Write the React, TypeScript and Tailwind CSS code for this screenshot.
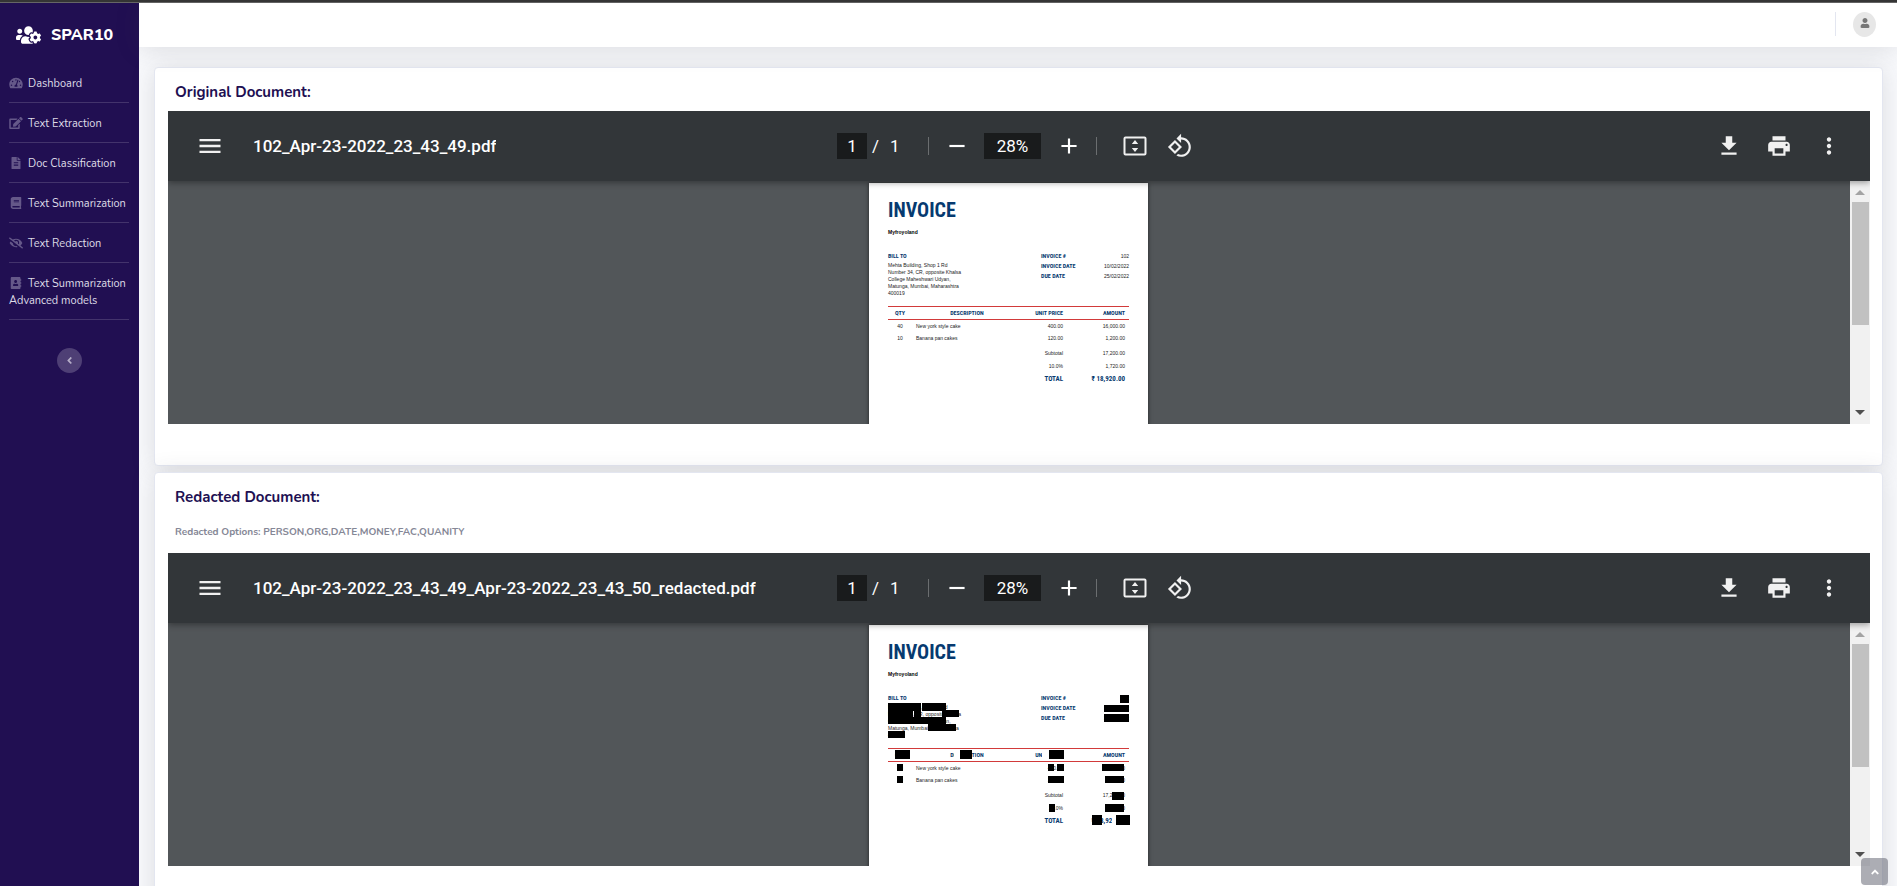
import React from "react";
import {
  FaAddressBook,
  FaAngleLeft,
  FaAngleUp,
  FaBook,
  FaEdit,
  FaEyeSlash,
  FaFileAlt,
  FaTachometerAlt,
  FaUser,
  FaUsersCog,
} from "react-icons/fa";
import { MdAdd, MdFileDownload, MdMenu, MdMoreVert, MdPrint, MdRemove } from "react-icons/md";
import type { IconType } from "react-icons";

const navItems: { label: string; icon: IconType }[] = [
  { label: "Dashboard", icon: FaTachometerAlt },
  { label: "Text Extraction", icon: FaEdit },
  { label: "Doc Classification", icon: FaFileAlt },
  { label: "Text Summarization", icon: FaBook },
  { label: "Text Redaction", icon: FaEyeSlash },
  { label: "Text Summarization Advanced models", icon: FaAddressBook },
];

function Sidebar() {
  return (
    <aside className="flex w-[139px] shrink-0 flex-col bg-[#210f52] pt-[20px] pr-[10px] pl-[9px]">
      <a href="#" className="flex h-6 items-center pl-[7px] text-white">
        <FaUsersCog className="h-[20px] w-[25px]" />
        <span className="ml-[10px] text-[16px] leading-6 font-extrabold">SPAR10</span>
      </a>
      <nav className="mt-[16px]">
        <ul>
          {navItems.map(({ label, icon: Icon }) => (
            <li key={label} className="border-b border-[#43336c]">
              <a href="#" className="block pt-[12px] pb-[10px] text-[11px] leading-[17px] text-[#dedbe6]">
                <Icon className="mr-[5px] inline-block h-[12px] w-[14px] align-[-2px] text-[#655889]" />
                {label}
              </a>
            </li>
          ))}
        </ul>
      </nav>
      <button
        aria-label="Collapse sidebar"
        className="mt-[28px] flex size-[25px] items-center justify-center self-center rounded-full bg-[#4e3f75] text-[#b6aec8]"
      >
        <FaAngleLeft className="size-[11px]" />
      </button>
    </aside>
  );
}

function FitIcon() {
  return (
    <svg viewBox="0 0 24 20" className="h-[20px] w-[24px]" fill="none">
      <rect x="1.5" y="1.5" width="21" height="17" rx="1" stroke="#f1f1f1" strokeWidth="2" />
      <path d="M12 4l3.200 4H8.800zM12 16l3.200-4H8.800z" fill="#f1f1f1" />
    </svg>
  );
}

function RotateIcon() {
  return (
    <svg viewBox="0 0 24 24" className="size-[26px]" fill="#f1f1f1">
      <path d="M7.340 6.410L.86 12.900l6.490 6.480 6.490-6.480-6.500-6.490zM3.690 12.900l3.660-3.660L11 12.900l-3.660 3.660-3.650-3.660zm15.670-6.260C17.610 4.880 15.300 4 13 4V.76L8.760 5 13 9.240V6c1.790 0 3.580.68 4.950 2.050 2.730 2.730 2.730 7.170 0 9.900C16.580 19.320 14.790 20 13 20c-.97 0-1.940-.21-2.840-.61l-1.490 1.490C10.020 21.620 11.510 22 13 22c2.300 0 4.610-.88 6.360-2.640 3.520-3.510 3.520-9.210 0-12.720z" />
    </svg>
  );
}

function ToolButton({ label, children }: { label: string; children: React.ReactNode }) {
  return (
    <button aria-label={label} className="flex size-10 shrink-0 items-center justify-center">
      {children}
    </button>
  );
}

function Toolbar({ title }: { title: string }) {
  return (
    <div className="relative z-10 flex h-[70px] items-center bg-[#323639] font-['Roboto',sans-serif] text-[#f1f1f1] shadow-[0_2px_6px_rgba(0,0,0,0.35)]">
      <div className="flex min-w-0 flex-1 items-center pl-[22px]">
        <ToolButton label="Menu">
          <MdMenu className="size-[28px]" />
        </ToolButton>
        <span className="ml-[23px] truncate text-[17px] leading-6 font-medium text-white">{title}</span>
      </div>
      <div className="flex shrink-0 items-center pr-[2px] text-[17px] leading-6 text-white">
        <input
          aria-label="Page number"
          defaultValue="1"
          className="h-[26px] w-[30px] bg-[#191b1c] text-center text-white"
        />
        <span className="ml-[5px]">/</span>
        <span className="ml-[11px] w-[10px]">1</span>
        <span className="ml-[28px] h-[18px] w-px bg-[#6b6e70]" />
        <span className="ml-[8px] flex">
          <ToolButton label="Zoom out">
            <MdRemove className="size-[26px]" />
          </ToolButton>
        </span>
        <input
          aria-label="Zoom level"
          defaultValue="28%"
          className="ml-[7px] h-[26px] w-[57px] bg-[#191b1c] text-center text-white"
        />
        <span className="ml-[8px] flex">
          <ToolButton label="Zoom in">
            <MdAdd className="size-[26px]" />
          </ToolButton>
        </span>
        <span className="ml-[7px] h-[18px] w-px bg-[#6b6e70]" />
        <span className="ml-[18px] flex gap-[5px]">
          <ToolButton label="Fit to page">
            <FitIcon />
          </ToolButton>
          <ToolButton label="Rotate">
            <RotateIcon />
          </ToolButton>
        </span>
      </div>
      <div className="flex flex-1 items-center justify-end gap-[10px] pr-[21px]">
        <ToolButton label="Download">
          <MdFileDownload className="size-[26px]" />
        </ToolButton>
        <ToolButton label="Print">
          <MdPrint className="size-[26px]" />
        </ToolButton>
        <ToolButton label="More actions">
          <MdMoreVert className="size-[26px]" />
        </ToolButton>
      </div>
    </div>
  );
}

type Mark = [left: number, top: number, width: number, height: number];

// Areas whose text has been removed from the page entirely.
const erased: Mark[] = [
  [85, 126, 6, 7],
  [173, 126, 7, 7],
  [243, 191, 4, 8],
];

const redactions: Mark[] = [
  [251, 70, 9, 8],
  [235, 80, 25, 7],
  [235, 89, 25, 8],
  [19, 78, 33, 8],
  [53, 78, 24, 8],
  [19, 85, 25, 7],
  [45, 85, 7, 7],
  [73, 85, 17, 7],
  [19, 92, 58, 7],
  [59, 99, 28, 7],
  [19, 106, 17, 7],
  [26, 125, 15, 9],
  [91, 125, 12, 9],
  [180, 125, 15, 9],
  [28, 139, 6, 7],
  [179, 139, 6, 7],
  [188, 139, 7, 7],
  [233, 139, 22, 7],
  [28, 151, 6, 7],
  [179, 151, 16, 7],
  [236, 151, 19, 7],
  [243, 167, 12, 8],
  [180, 179, 6, 8],
  [236, 179, 19, 8],
  [223, 190, 10, 10],
  [247, 190, 14, 10],
];

function Invoice({ redacted }: { redacted: boolean }) {
  const head = "font-['Roboto_Condensed','Liberation_Sans_Narrow','Liberation_Sans',sans-serif] font-bold text-[#063a70]";
  return (
    <article className="relative mt-[2px] h-[394px] w-[279px] shrink-0 bg-white px-[19px] pt-[13px] font-['Liberation_Sans',Arial,sans-serif] text-[5px] text-[#222] shadow-[0_0_4px_rgba(0,0,0,0.6)]">
      <h3 className={`${head} text-[20px] leading-[28px]`}>INVOICE</h3>
      <p className="mt-[4px] leading-[8px] font-bold text-black">Myfroyoland</p>
      <div className="mt-[15px] flex justify-between">
        <div>
          <h4 className={`${head} text-[6px] leading-[10px]`}>BILL TO</h4>
          <p className="mt-px leading-[7px]">
            Mehta Building, Shop 1 Rd
            <br />
            Number 34, CR, opposite Khalsa
            <br />
            College Maheshwari Udyan,
            <br />
            Matunga, Mumbai, Maharashtra
            <br />
            400019
          </p>
        </div>
        <dl className="grid w-[88px] grid-cols-[1fr_auto] content-start leading-[10px]">
          <dt className={`${head} text-[6px]`}>INVOICE #</dt>
          <dd className="text-right">102</dd>
          <dt className={`${head} text-[6px]`}>INVOICE DATE</dt>
          <dd className="text-right">10/02/2022</dd>
          <dt className={`${head} text-[6px]`}>DUE DATE</dt>
          <dd className="text-right">25/02/2022</dd>
        </dl>
      </div>
      <table className="mt-[9px] w-full table-fixed border-collapse leading-[12px]">
        <thead className={`${head} border-y border-[#d23a3a] text-[6px]`}>
          <tr>
            <th className="w-[24px]">QTY</th>
            <th className="w-[110px]">DESCRIPTION</th>
            <th className="w-[41px] text-right">UNIT PRICE</th>
            <th className="pr-[4px] text-right">AMOUNT</th>
          </tr>
        </thead>
        <tbody>
          <tr>
            <td className="text-center">40</td>
            <td className="pl-[4px]">New york style cake</td>
            <td className="text-right">400.00</td>
            <td className="pr-[4px] text-right">16,000.00</td>
          </tr>
          <tr>
            <td className="text-center">10</td>
            <td className="pl-[4px]">Banana pan cakes</td>
            <td className="text-right">120.00</td>
            <td className="pr-[4px] text-right">1,200.00</td>
          </tr>
        </tbody>
        <tfoot className="leading-[13px]">
          <tr>
            <td colSpan={3} className="pt-[3px] text-right">Subtotal</td>
            <td className="pt-[3px] pr-[4px] text-right">17,200.00</td>
          </tr>
          <tr>
            <td colSpan={3} className="text-right">10.0%</td>
            <td className="pr-[4px] text-right">1,720.00</td>
          </tr>
          <tr className={`${head} text-[7px] leading-[12px]`}>
            <td colSpan={3} className="text-right">TOTAL</td>
            <td className="pr-[4px] text-right">₹ 18,920.00</td>
          </tr>
        </tfoot>
      </table>
      {redacted &&
        erased.map(([left, top, width, height]) => (
          <span key={`${left}-${top}`} className="absolute bg-white" style={{ left, top, width, height }} />
        ))}
      {redacted &&
        redactions.map(([left, top, width, height]) => (
          <span key={`${left}-${top}`} className="absolute bg-black" style={{ left, top, width, height }} />
        ))}
    </article>
  );
}

function PdfViewer({ title, redacted = false }: { title: string; redacted?: boolean }) {
  return (
    <section aria-label={title} className="overflow-hidden bg-[#525659]">
      <Toolbar title={title} />
      <div className="flex h-[243px]">
        <div className="flex flex-1 justify-center overflow-hidden pr-px">
          <Invoice redacted={redacted} />
        </div>
        <div className="flex w-5 flex-col items-center bg-[#f1f1f1]">
          <svg viewBox="0 0 10 5" className="mt-[9px] h-[5px] w-[10px]" fill="#a3a3a3">
            <path d="M5 0l5 5H0z" />
          </svg>
          <div className="mt-[7px] h-[123px] w-[17px] bg-[#c1c1c1]" />
          <svg viewBox="0 0 10 5" className="mt-auto mb-[9px] h-[5px] w-[10px]" fill="#505050">
            <path d="M5 5L0 0h10z" />
          </svg>
        </div>
      </div>
    </section>
  );
}

const cardClass =
  "rounded-[4px] border border-[#e3e6f0] bg-white pt-[12px] pr-[12px] pb-[41px] pl-[13px] shadow-[0_2px_25px_rgba(58,59,69,0.15)]";
const cardTitleClass = "px-[7px] text-[15px] leading-6 font-bold text-[#210f52]";

export default function App() {
  return (
    <div className="flex h-screen flex-col overflow-hidden bg-[#f8f9fc] font-['Nunito','Open_Sans',sans-serif]">
      <div className="h-[3px] shrink-0 border-b border-[#666] bg-[#353535]" />
      <div className="flex min-h-0 flex-1">
        <Sidebar />
        <div className="min-w-0 flex-1">
          <header className="relative flex h-[44px] items-center justify-end bg-white pr-[21px] pb-[2px] shadow-[0_2px_25px_rgba(58,59,69,0.15)]">
            <span className="h-6 w-px bg-[#e3e6f0]" />
            <button
              aria-label="Account"
              className="ml-[17px] flex h-[25px] w-[23px] items-center justify-center rounded-[50%] bg-[#e7e7e7] pb-[2px] text-[#777]"
            >
              <FaUser className="size-[10px]" />
            </button>
          </header>
          <main className="flex flex-col gap-[6px] pt-[20px] pr-[14px] pl-[15px]">
            <div className={cardClass}>
              <h2 className={`${cardTitleClass} mb-[7px]`}>Original Document:</h2>
              <PdfViewer title="102_Apr-23-2022_23_43_49.pdf" />
            </div>
            <div className={cardClass}>
              <h2 className={cardTitleClass}>Redacted Document:</h2>
              <p className="mt-[13px] mb-[11px] px-[7px] text-[10px] leading-5 font-bold text-[#858796]">
                Redacted Options: PERSON,ORG,DATE,MONEY,FAC,QUANITY
              </p>
              <PdfViewer title="102_Apr-23-2022_23_43_49_Apr-23-2022_23_43_50_redacted.pdf" redacted />
            </div>
          </main>
        </div>
      </div>
      <a
        href="#"
        aria-label="Scroll to top"
        className="fixed right-[9px] bottom-px z-20 flex size-[27px] items-center justify-center rounded-[4px] bg-[#5a5c69]/50 text-white"
      >
        <FaAngleUp className="size-[12px]" />
      </a>
    </div>
  );
}
